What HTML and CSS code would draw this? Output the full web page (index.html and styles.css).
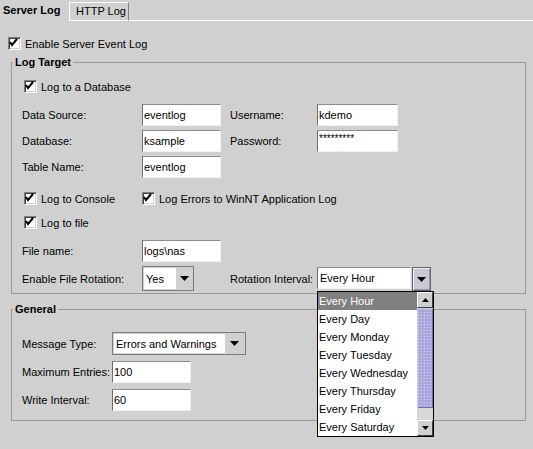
FILE: index.html
```html
<!DOCTYPE html>
<html lang="en">
<head>
  <meta charset="UTF-8" />
  <title>Server Log</title>
  <link rel="stylesheet" href="styles.css">
</head>
<body>
  <div class="tabs">
    <div class="tab active">Server Log</div>
    <div class="tab">HTTP Log</div>
    <div class="tab-fill"></div>
  </div>

  <div class="check top-check">
    <span class="box"><svg width="11" height="11" viewBox="0 0 11 11"><path d="M2 5 L4 8 L9 2" /></svg></span>
    Enable Server Event Log
  </div>

  <fieldset class="group">
    <legend>Log Target</legend>
    <div class="group-body target-body">
      <div class="check db-check">
        <span class="box"><svg width="11" height="11" viewBox="0 0 11 11"><path d="M2 5 L4 8 L9 2" /></svg></span>
        Log to a Database
      </div>

      <div class="form-grid db-grid">
        <span>Data Source:</span>
        <span class="field">eventlog</span>
        <span class="label-2">Username:</span>
        <span class="field wide">kdemo</span>

        <span>Database:</span>
        <span class="field">ksample</span>
        <span class="label-2">Password:</span>
        <span class="field wide pass">*********</span>

        <span>Table Name:</span>
        <span class="field">eventlog</span>
      </div>

      <div class="check-row">
        <div class="check">
          <span class="box"><svg width="11" height="11" viewBox="0 0 11 11"><path d="M2 5 L4 8 L9 2" /></svg></span>
          Log to Console
        </div>
        <div class="check">
          <span class="box"><svg width="11" height="11" viewBox="0 0 11 11"><path d="M2 5 L4 8 L9 2" /></svg></span>
          Log Errors to WinNT Application Log
        </div>
      </div>

      <div class="check file-check">
        <span class="box"><svg width="11" height="11" viewBox="0 0 11 11"><path d="M2 5 L4 8 L9 2" /></svg></span>
        Log to file
      </div>

      <div class="form-grid file-grid">
        <span>File name:</span>
        <span class="field">logs\nas</span>
        <span></span>
        <span></span>

        <span>Enable File Rotation:</span>
        <div class="combo yes-combo">
          <span class="combo-val">Yes</span>
          <span class="combo-arrow"><svg width="9" height="5" viewBox="0 0 9 5"><path d="M0 0 H9 L4.5 5 Z" /></svg></span>
        </div>
        <span class="label-2">Rotation Interval:</span>
        <div class="interval">
          <span class="field interval-val">Every Hour</span>
          <span class="interval-btn"><svg width="9" height="5" viewBox="0 0 9 5"><path d="M0 0 H9 L4.5 5 Z" /></svg></span>

          <div class="popup">
            <div class="popup-list">
              <div class="item sel">Every Hour</div>
              <div class="item">Every Day</div>
              <div class="item">Every Monday</div>
              <div class="item">Every Tuesday</div>
              <div class="item">Every Wednesday</div>
              <div class="item">Every Thursday</div>
              <div class="item">Every Friday</div>
              <div class="item">Every Saturday</div>
            </div>
            <div class="sbar">
              <span class="sbtn"><svg width="7" height="4" viewBox="0 0 7 4"><path d="M0 4 H7 L3.5 0 Z" /></svg></span>
              <span class="thumb"></span>
              <span class="track"></span>
              <span class="sbtn"><svg width="7" height="4" viewBox="0 0 7 4"><path d="M0 0 H7 L3.5 4 Z" /></svg></span>
            </div>
          </div>
        </div>
      </div>
    </div>
  </fieldset>

  <fieldset class="group general">
    <legend>General</legend>
    <div class="group-body general-body">
      <div class="form-grid gen-grid">
        <span>Message Type:</span>
        <div class="combo msg-combo">
          <span class="combo-val">Errors and Warnings</span>
          <span class="combo-arrow"><svg width="9" height="5" viewBox="0 0 9 5"><path d="M0 0 H9 L4.5 5 Z" /></svg></span>
        </div>

        <span>Maximum Entries:</span>
        <span class="field">100</span>

        <span>Write Interval:</span>
        <span class="field">60</span>
      </div>
    </div>
  </fieldset>
</body>
</html>
```

FILE: styles.css
```css
body {
  margin: 0;
  background-color: #d0d0d0;
  font-family: "Liberation Sans", Arial, sans-serif;
  font-size: 11px;
  color: #000;
  width: 533px;
  height: 449px;
  overflow: hidden;
}
.tabs {
  display: flex;
  height: 21px;
}
.tab {
  box-sizing: border-box;
  width: 60px;
  height: 19px;
  margin-top: 2px;
  padding-left: 6px;
  line-height: 16px;
  border: 1px solid #fff;
  border-right-color: #808080;
}
.tab.active {
  width: 69px;
  height: 21px;
  margin-top: 0;
  padding: 1px 0 0 3px;
  line-height: 19px;
  border: none;
  font-weight: bold;
}
.tab-fill {
  flex: 1;
  height: 20px;
  border-bottom: 1px solid #fff;
}
.check {
  display: flex;
  align-items: center;
  gap: 4px;
  height: 17px;
}
.box {
  box-sizing: border-box;
  width: 13px;
  height: 13px;
  flex: none;
  background-color: #fff;
  border: 1px solid;
  border-color: #808080 #fff #fff #808080;
  box-shadow: inset 1px 1px 0 #404040, inset -1px -1px 0 #d4d4d4;
}
.box svg {
  display: block;
  margin: -1px 0 0 -1px;
}
.box path {
  fill: none;
  stroke: #000;
  stroke-width: 2;
  stroke-linejoin: miter;
}
.top-check {
  margin: 14px 0 0 8px;
}
.group {
  margin: 3px 7px 0 11px;
  padding: 0;
  border: 1px solid #999;
  min-width: 0;
}
.group legend {
  margin-left: 1px;
  padding: 0 2px;
  font-weight: bold;
  line-height: 14px;
}
.group-body {
  padding: 0 0 2px 10px;
}
.db-check {
  margin: 9px 0 0 2px;
}
.form-grid {
  display: grid;
  grid-template-columns: 120px 79px 96px 81px;
  grid-auto-rows: 22px;
  row-gap: 4px;
  align-items: center;
}
.db-grid {
  margin-top: 9px;
}
.label-2 {
  padding-left: 9px;
}
.field {
  box-sizing: border-box;
  height: 22px;
  padding-left: 1px;
  line-height: 20px;
  background-color: #fff;
  border: 1px solid;
  border-color: #8c8c8c #f2f2f2 #f2f2f2 #6e6e6e;
  white-space: nowrap;
  overflow: hidden;
}
.field.pass {
  line-height: 16px;
  font-size: 10px;
}
.check-row {
  display: grid;
  grid-template-columns: 120px auto;
  margin-top: 12px;
}
.check-row .check:first-child {
  margin-left: 2px;
}
.file-check {
  margin: 7px 0 0 2px;
}
.file-grid {
  margin-top: 9px;
  grid-template-rows: 22px 25px;
}
.combo {
  box-sizing: border-box;
  display: flex;
  padding: 1px;
  border: 1px solid #7c7c7c;
}
.combo-val {
  background-color: #fff;
  padding-left: 2px;
  display: flex;
  align-items: center;
  white-space: nowrap;
}
.combo-arrow {
  flex: 1;
  display: flex;
  align-items: center;
  justify-content: center;
}
.yes-combo {
  width: 52px;
  height: 25px;
}
.yes-combo .combo-val {
  width: 30px;
}
.interval {
  position: relative;
  display: flex;
  width: 115px;
  height: 24px;
  align-self: end;
}
.interval-val {
  width: 94px;
  height: 22px;
  padding-left: 2px;
}
.interval-btn {
  box-sizing: border-box;
  width: 19px;
  height: 24px;
  margin-left: 1px;
  display: flex;
  align-items: center;
  justify-content: center;
  background-color: #c8c8d6;
  border: 1px solid #666;
  box-shadow: inset 1px 1px 0 #eeeef4, inset -1px -1px 0 #9898a8;
}
.popup {
  position: absolute;
  left: 0;
  top: 24px;
  z-index: 2;
  box-sizing: border-box;
  width: 117px;
  height: 146px;
  display: flex;
  background-color: #fff;
  border: 1px solid #000;
}
.popup-list {
  flex: 1;
}
.item {
  height: 18px;
  line-height: 18px;
  padding-left: 1px;
  white-space: nowrap;
}
.item.sel {
  background-color: #808080;
  color: #fff;
}
.sbar {
  width: 16px;
  display: flex;
  flex-direction: column;
  background-color: #d8d8d8;
}
.sbtn {
  box-sizing: border-box;
  height: 16px;
  display: flex;
  align-items: center;
  justify-content: center;
  background-color: #d0d0d0;
  border: 1px solid;
  border-color: #fff #404040 #404040 #fff;
}
.thumb {
  height: 100px;
  background-color: #a8a8dc;
  background-image: radial-gradient(circle, #d6d6f6 0.7px, transparent 1px);
  background-size: 3px 3px;
  box-shadow: inset 1px 1px 0 #c8c8f0, inset -1px -1px 0 #7070b0;
}
.track {
  flex: 1;
}
.general {
  margin-top: 8px;
}
.general-body {
  padding-bottom: 9px;
}
.gen-grid {
  margin-top: 16px;
  grid-template-columns: 90px 134px;
  grid-template-rows: 23px 22px 22px;
  row-gap: 6px;
}
.gen-grid .field {
  width: 79px;
}
.msg-combo {
  height: 23px;
}
.msg-combo .combo-val {
  width: 109px;
}
```
